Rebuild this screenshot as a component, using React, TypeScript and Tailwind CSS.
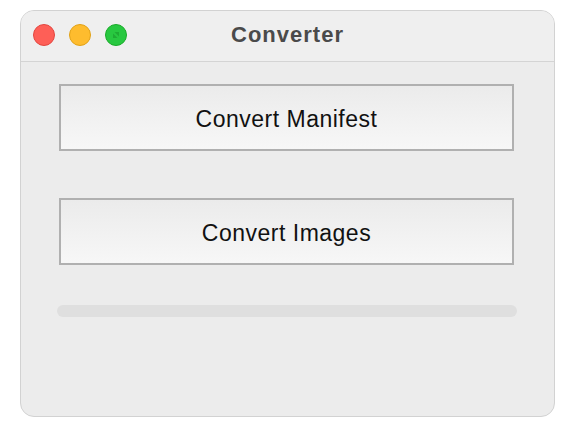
import React from "react";

const font = { fontFamily: '"Liberation Sans", Arial, sans-serif' };

function TrafficLights() {
  return (
    <div className="flex items-center gap-[14px]">
      <span className="h-[22px] w-[22px] rounded-full border border-[#e2463f] bg-[#fe5f57]" />
      <span className="h-[22px] w-[22px] rounded-full border border-[#e1a116] bg-[#febc2e]" />
      <span className="relative flex h-[22px] w-[22px] items-center justify-center rounded-full border border-[#1aab29] bg-[#28c840]">
        <svg width="12" height="12" viewBox="0 0 12 12" className="opacity-30">
          <path d="M3 9 L3 4.5 L7.5 9 Z" fill="#0b6a16" />
          <path d="M9 3 L9 7.5 L4.5 3 Z" fill="#0b6a16" />
        </svg>
      </span>
    </div>
  );
}

function ConvertButton({ label }: { label: string }) {
  return (
    <button
      type="button"
      className="flex h-[67px] w-[455px] items-center justify-center border-2 border-[#b0b0b0] bg-gradient-to-b from-[#ebebeb] to-[#f7f7f7] pt-[4px] text-[23px] tracking-[0.5px] text-[#111111]"
    >
      {label}
    </button>
  );
}

export default function App() {
  return (
    <div className="h-[435px] w-[573px] bg-white pl-[20px] pt-[10px]" style={font}>
      <div className="flex h-[407px] w-[535px] flex-col overflow-hidden rounded-[14px] border border-[#d2d2d2] bg-[#ececec]">
        <div className="relative flex h-[51px] shrink-0 items-center border-b border-[#d4d4d4] bg-[#efefef] pb-[2px] pl-[12px]">
          <TrafficLights />
          <span className="absolute inset-x-0 top-[7px] text-center text-[22px] font-bold tracking-[1px] text-[#4a4a4a]">
            Converter
          </span>
        </div>
        <div className="flex flex-col items-start pl-[38px] pt-[22px]">
          <ConvertButton label="Convert Manifest" />
          <div className="h-[47px]" />
          <ConvertButton label="Convert Images" />
          <div className="ml-[-2px] mt-[40px] h-[12px] w-[460px] rounded-full bg-[#dfdfdf]" />
        </div>
      </div>
    </div>
  );
}
